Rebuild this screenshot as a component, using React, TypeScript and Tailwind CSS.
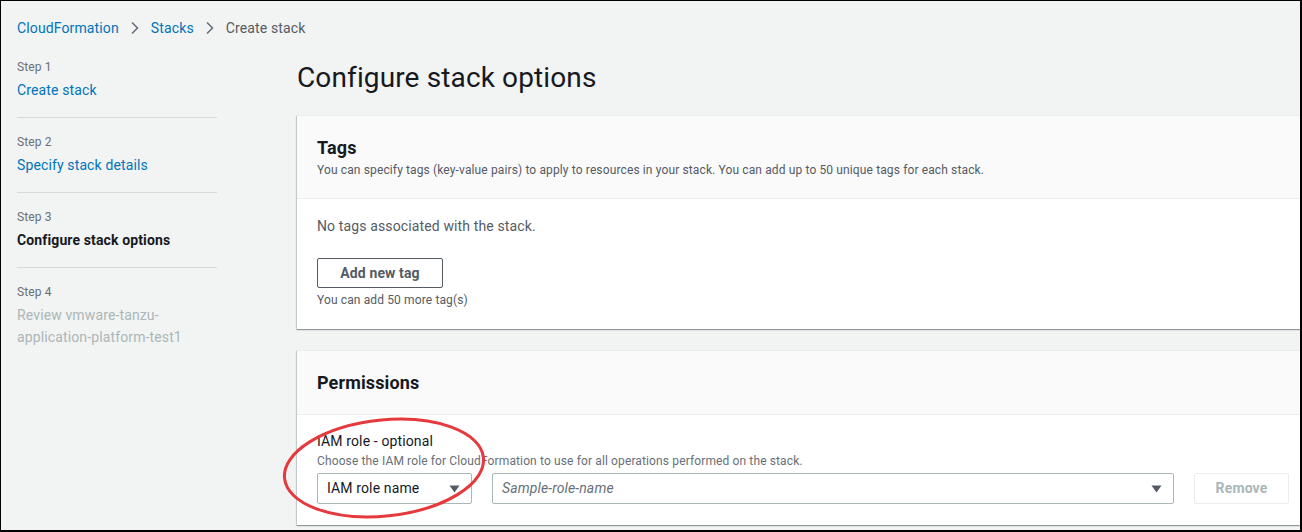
import React from "react";

const Tri = () => (
  <svg width="11" height="8" viewBox="0 0 11 8" className="shrink-0">
    <path d="M0.5 0.5 H10.5 L5.5 7.5 Z" fill="#545b64" />
  </svg>
);

const Chevron = () => (
  <svg width="10" height="14" viewBox="0 0 10 14" className="mx-[11px]">
    <path d="M2 1.5 L7.5 7 L2 12.5" fill="none" stroke="#687078" strokeWidth="1.6" />
  </svg>
);

export default function App() {
  return (
    <div
      className="relative w-[1302px] h-[532px] overflow-hidden bg-[#f2f3f3] border-black border-t border-l border-r-2 border-b-2 text-[#16191f] tracking-[0.008em]"
      style={{ fontFamily: "Roboto, 'Open Sans', sans-serif" }}
    >
      {/* breadcrumb */}
      <div className="flex items-center pl-[16px] pt-[17px] text-[14px] leading-[20px]">
        <span className="text-[#0073bb]">CloudFormation</span>
        <Chevron />
        <span className="text-[#0073bb]">Stacks</span>
        <Chevron />
        <span className="text-[#545b64]">Create stack</span>
      </div>

      <div className="flex">
        {/* sidebar */}
        <div className="w-[200px] ml-[16px] shrink-0 pt-[21px]">
          <div className="pb-[17px] border-b border-[#d5dbdb]">
            <div className="text-[12px] leading-[16px] text-[#687078]">Step 1</div>
            <div className="mt-[5px] text-[14px] leading-[20px] text-[#0073bb]">Create stack</div>
          </div>
          <div className="pt-[16px] pb-[17px] border-b border-[#d5dbdb]">
            <div className="text-[12px] leading-[16px] text-[#687078]">Step 2</div>
            <div className="mt-[5px] text-[14px] leading-[20px] text-[#0073bb]">Specify stack details</div>
          </div>
          <div className="pt-[16px] pb-[17px] border-b border-[#d5dbdb]">
            <div className="text-[12px] leading-[16px] text-[#687078]">Step 3</div>
            <div className="mt-[5px] text-[14px] leading-[20px] font-bold text-[#16191f]">Configure stack options</div>
          </div>
          <div className="pt-[16px]">
            <div className="text-[12px] leading-[16px] text-[#687078]">Step 4</div>
            <div className="mt-[4px] text-[14px] leading-[22px] text-[#aab7b8]">
              Review vmware-tanzu-
              <br />
              application-platform-test1
            </div>
          </div>
        </div>

        {/* main */}
        <div className="ml-[80px] w-[1030px] shrink-0 pt-[22px]">
          <h1 className="text-[28px] leading-[36px] font-normal text-[#16191f]">Configure stack options</h1>

          {/* Tags card */}
          <div className="mt-[19px] bg-white border-t border-[#eaeded] shadow-[0_1px_1px_0_rgba(0,28,36,0.3),-1px_1px_1px_0_rgba(0,28,36,0.15)]">
            <div className="bg-[#fafafa] border-b border-[#eaeded] px-[20px] pt-[21px] pb-[20px]">
              <div className="text-[18px] leading-[22px] font-bold">Tags</div>
              <div className="mt-[3px] text-[12px] leading-[16px] text-[#545b64]">
                You can specify tags (key-value pairs) to apply to resources in your stack. You can add up to 50 unique tags for each stack.
              </div>
            </div>
            <div className="px-[20px] pt-[17px] pb-[21px]">
              <div className="text-[14px] leading-[20px] text-[#545b64]">No tags associated with the stack.</div>
              <div className="mt-[22px] w-[126px] h-[30px] flex items-center justify-center border border-[#545b64] rounded-[2px] text-[14px] font-bold text-[#545b64]">
                Add new tag
              </div>
              <div className="mt-[4px] text-[12px] leading-[16px] text-[#545b64]">You can add 50 more tag(s)</div>
            </div>
          </div>

          {/* Permissions card */}
          <div className="mt-[21px] bg-white border-t border-[#eaeded] shadow-[0_1px_1px_0_rgba(0,28,36,0.3),-1px_1px_1px_0_rgba(0,28,36,0.15)]">
            <div className="bg-[#fafafa] border-b border-[#eaeded] px-[20px] pt-[21px] pb-[20px]">
              <div className="text-[18px] leading-[22px] font-bold">Permissions</div>
            </div>
            <div className="px-[20px] pt-[16px] pb-[21px]">
              <div className="text-[14px] leading-[20px] text-[#16191f]">IAM role - optional</div>
              <div className="mt-[2px] text-[12px] leading-[16px] text-[#687078]">
                Choose the IAM role for CloudFormation to use for all operations performed on the stack.
              </div>
              <div className="mt-[4px] flex items-center">
                <div className="shrink-0 w-[155px] h-[31px] flex items-center justify-between pl-[9px] pr-[11px] border border-[#aab7b8] rounded-[2px] text-[14px] text-[#16191f]">
                  <span>IAM role name</span>
                  <Tri />
                </div>
                <div className="shrink-0 ml-[20px] w-[682px] h-[31px] flex items-center justify-between pl-[9px] pr-[11px] border border-[#aab7b8] rounded-[2px] text-[14px] italic text-[#687078]">
                  <span>Sample-role-name</span>
                  <Tri />
                </div>
                <div className="shrink-0 ml-[20px] w-[95px] h-[31px] flex items-center justify-center border border-[#eaeded] rounded-[2px] text-[14px] font-bold text-[#aab7b8]">
                  Remove
                </div>
              </div>
            </div>
          </div>
        </div>
      </div>

      {/* red annotation ellipse */}
      <svg className="absolute left-[278px] top-[410px] pointer-events-none" width="214" height="116" viewBox="0 0 214 116">
        <ellipse cx="105" cy="57" rx="100" ry="48" transform="rotate(-6 105 57)" fill="none" stroke="#e5393e" strokeWidth="3" />
      </svg>
    </div>
  );
}
